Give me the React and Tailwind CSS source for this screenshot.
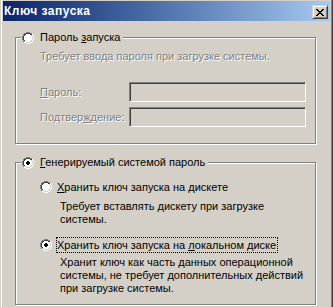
import React from 'react';

// классическая радиокнопка 12x12, рисуем попиксельно
const RADIO_ROWS = [
  '....aaaa....',
  '..aabbbbaa..',
  '.abbwwwwbbh.',
  '.abwwwwwwch.',
  'abwwwddwwwch',
  'abwwddddwwch',
  'abwwddddwwch',
  'abwwwddwwwch',
  '.abwwwwwwch.',
  '.accwwwwcch.',
  '..hhcccchh..',
  '....hhhh....',
];

const COLORS = { a: '#808080', b: '#404040', c: '#d4d0c8', w: '#ffffff', h: '#ffffff' };

function Radio({ checked }) {
  const cells = [];
  RADIO_ROWS.forEach((row, y) => {
    row.split('').forEach((ch, x) => {
      if (ch === '.') return;
      let fill = COLORS[ch];
      if (ch === 'd') fill = checked ? '#000000' : '#ffffff';
      cells.push(<rect key={`${x}-${y}`} x={x} y={y} width="1" height="1" fill={fill} />);
    });
  });
  return (
    <svg width="12" height="12" viewBox="0 0 12 12" shapeRendering="crispEdges" className="shrink-0 block">
      {cells}
    </svg>
  );
}

function CloseGlyph() {
  const rows = ['XX....XX', '.XX..XX.', '..XXXX..', '...XX...', '..XXXX..', '.XX..XX.', 'XX....XX'];
  return (
    <svg width="8" height="7" viewBox="0 0 8 7" shapeRendering="crispEdges" className="block">
      {rows.map((row, y) =>
        row.split('').map((ch, x) => ch === 'X' ? <rect key={`${x}-${y}`} x={x} y={y} width="1" height="1" fill="#000" /> : null)
      )}
    </svg>
  );
}

const disabledText = 'text-[#808080] [text-shadow:1px_1px_0_#fff]';

function Input() {
  return (
    <div className="h-[20px] w-full bg-[#d4d0c8] border border-t-[#808080] border-l-[#808080] border-r-white border-b-white shadow-[inset_1px_1px_0_#404040,inset_-1px_-1px_0_#d4d0c8]" />
  );
}

function GroupBox({ label, checked, children }) {
  return (
    <fieldset className="w-[301px] border border-[#808080] shadow-[inset_1px_1px_0_#fff,1px_1px_0_#fff]">
      <legend className="ml-[5px] pl-px pr-[3px] bg-[#d4d0c8]">
        <span className="flex items-center h-[13px]">
          <Radio checked={checked} />
          <span className="ml-[6px] leading-[13px] text-black">{label}</span>
        </span>
      </legend>
      {children}
    </fieldset>
  );
}

function SubOption({ label, checked, focused, children }) {
  return (
    <div>
      <div className="flex items-center">
        <Radio checked={checked} />
        <span className={`ml-[4px] pr-px leading-[14px] border border-dotted ${focused ? 'border-black' : 'border-transparent'}`}>
          {label}
        </span>
      </div>
      {children}
    </div>
  );
}

export default function App() {
  return (
    <div className="w-[333px] h-[307px] overflow-hidden bg-[#d4d0c8] pt-px pl-[3px] pr-[3px] font-['Liberation_Sans',Arial,sans-serif] text-[11px] text-black shadow-[inset_1px_0_0_#d4d0c8,inset_2px_0_0_#fff,inset_-1px_0_0_#404040,inset_-2px_0_0_#808080]">
      {/* заголовок окна */}
      <div className="h-[20px] flex items-start justify-between bg-linear-to-r from-[#0a246a] to-[#a6caf0] pl-px pr-[2px]">
        <span className="text-white font-bold text-[12px] tracking-[0.5px] leading-[20px]">Ключ запуска</span>
        <div className="mt-[4px] w-[16px] h-[14px] flex items-center justify-center bg-[#d4d0c8] border border-t-[#d4d0c8] border-l-[#d4d0c8] border-r-[#404040] border-b-[#404040] shadow-[inset_1px_1px_0_#fff,inset_-1px_-1px_0_#808080]">
          <CloseGlyph />
        </div>
      </div>

      <div className="pl-[12px] pt-[10px]">
        <GroupBox label={<>Пароль <u>з</u>апуска</>}>
          <div className="pl-[24px] pr-[9px] pb-[16px]">
            <p className={`mt-[6px] leading-[13px] ${disabledText}`}>Требует ввода пароля при загрузке системы.</p>
            <div className="mt-[19px] grid grid-cols-[89px_1fr] gap-y-[5px] items-center">
              <span className={disabledText}><u>П</u>ароль:</span>
              <Input />
              <span className={disabledText}>Подтвер<u>ж</u>дение:</span>
              <Input />
            </div>
          </div>
        </GroupBox>

        <div className="mt-[12px]">
          <GroupBox label={<><u>Г</u>енерируемый системой пароль</>} checked>
            <div className="pl-[24px] pr-[6px] pt-[10px] pb-[9px]">
              <SubOption label={<><u>Х</u>ранить ключ запуска на дискете</>}>
                <p className="mt-[5px] ml-[20px] leading-[13px]">
                  Требует вставлять дискету при загрузке<br />системы.
                </p>
              </SubOption>
              <div className="mt-[11px]">
                <SubOption label={<>Хранить ключ запуска на <u>л</u>окальном диске</>} checked focused>
                  <p className="mt-[3px] ml-[20px] leading-[13px]">
                    Хранит ключ как часть данных операционной<br />системы, не требует дополнительных действий<br />при загрузке системы.
                  </p>
                </SubOption>
              </div>
            </div>
          </GroupBox>
        </div>
      </div>
    </div>
  );
}
